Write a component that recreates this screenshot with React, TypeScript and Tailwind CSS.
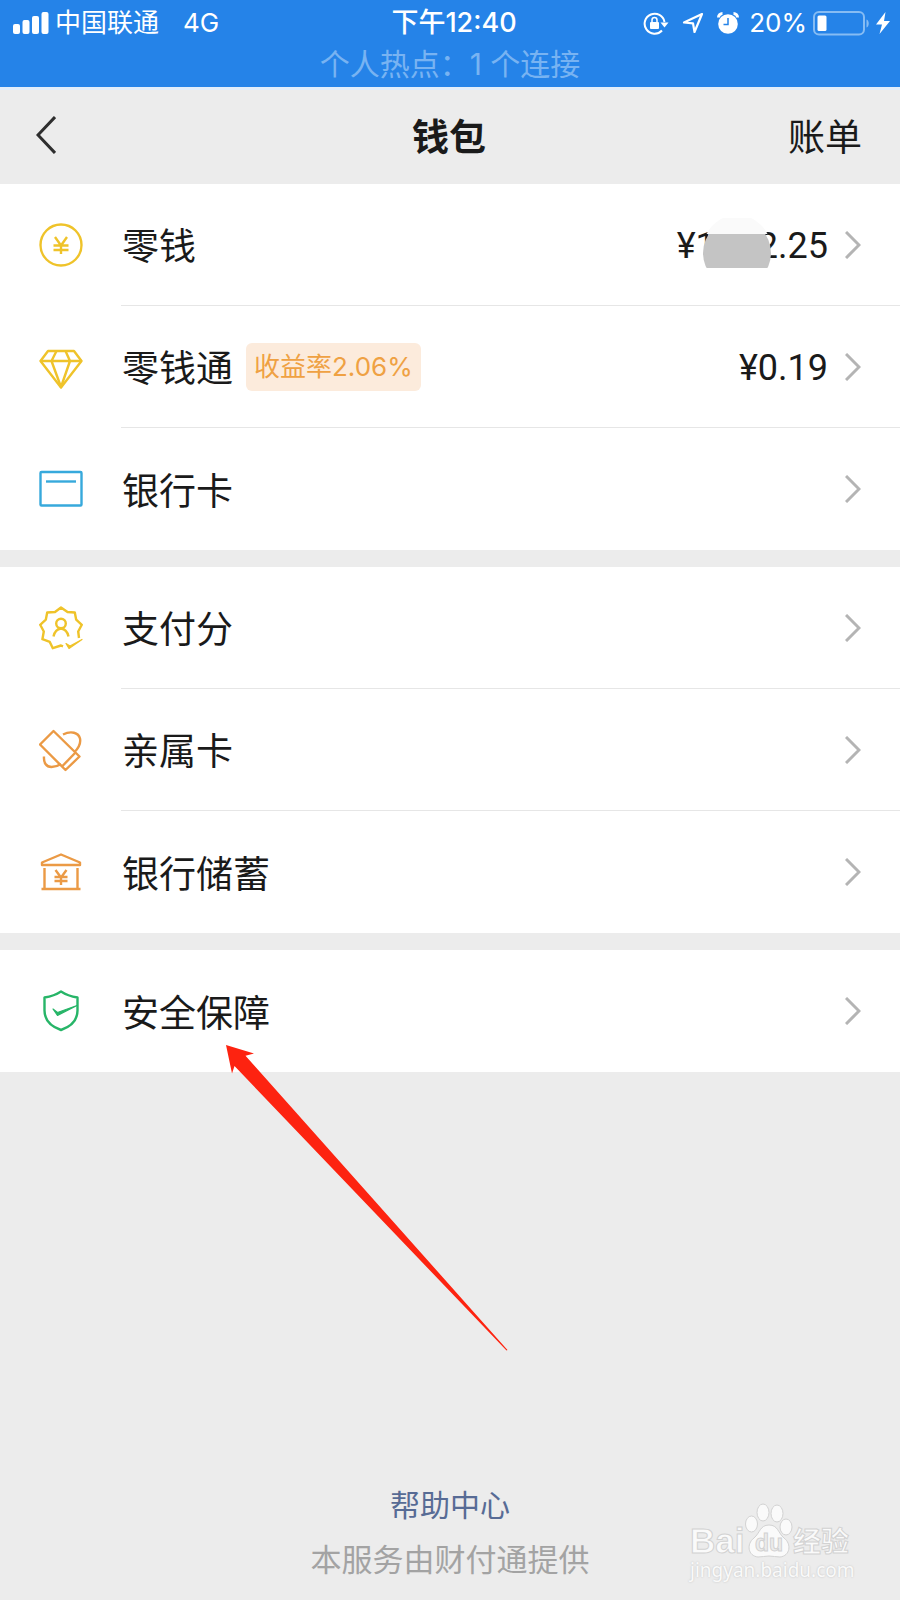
import type { ReactNode } from "react";

type Item = {
  label: string;
  icon: ReactNode;
  rate?: string;
  amount?: ReactNode;
  pointer?: boolean;
};

const iconProps = {
  viewBox: "0 0 44 44",
  fill: "none",
  stroke: "currentColor",
  strokeWidth: 2.4,
  strokeLinejoin: "round" as const,
  "aria-hidden": true,
};

function CoinIcon() {
  return (
    <svg {...iconProps} className="size-11 text-[#efc32a]">
      <circle cx="22" cy="22" r="20.5" />
      <path d="M16 14l6 8.500 6-8.500M22 22.500V31M14.500 22.500h15M14.500 27h15" />
    </svg>
  );
}

function DiamondIcon() {
  return (
    <svg {...iconProps} className="size-11 text-[#efc32a]">
      <path d="M1.500 16L9 6h26l7.500 10L22 42.500z" />
      <path d="M1.500 16h41M17.500 6l-5 10L22 42l9-26-4.500-10" />
    </svg>
  );
}

function CardIcon() {
  return (
    <svg {...iconProps} className="size-11 text-[#37a9dc]">
      <rect x="1.500" y="5" width="41" height="33.500" rx="1" />
      <path d="M7 14.500h30" />
    </svg>
  );
}

function ScoreIcon() {
  return (
    <svg {...iconProps} className="size-11 text-[#efc32a]">
      <path d="M40 32l-.8-6.500 3.600-6.700-5.600-5.100-1.400-7.200-7.300-.5L22 1.500 16 6l-7.800.5-1.400 7.200-5.600 5.100 3.600 6.700-1.400 7.700 7.400 2.700 3 6.300L22 39.500l2 .8" />
      <circle cx="22" cy="17.500" r="4.800" />
      <path d="M14.500 30.500c1-4.500 3.500-7.500 7.500-8 4 .5 6.500 3.500 7.500 8" />
      <path d="M27 37.500l4 2.500 12-6.500L30 42.500z" fill="currentColor" strokeWidth="1.200" />
    </svg>
  );
}

function FamilyCardIcon() {
  return (
    <svg {...iconProps} className="size-11 text-[#eb9a45]">
      <path d="M1 16.500L14.500 3 40.500 28.500 26.500 42z" />
      <path d="M23 38.500L36.500 24.500" />
      <path d="M24 6.500c8-4 15.500-2 17 4 1 5-2 10-5.500 13.500M5 28.500c-.5 6 2 10.500 7.500 10.500 3.500 0 6.500-1 9.500-3" />
    </svg>
  );
}

function SavingsIcon() {
  return (
    <svg {...iconProps} className="size-11 text-[#eb9a45]">
      <path d="M3 15v-2.500l19-8 19 8V15zM5.500 18v21M38.500 18v21M2.500 39h39" />
      <path d="M16.500 20l5.500 7.500 5.500-7.500M22 27.500V35M15.500 27h13M15.500 31h13" />
    </svg>
  );
}

function ShieldIcon() {
  return (
    <svg {...iconProps} className="size-11 text-[#27b568]">
      <path d="M22 2.500c4.500 3 10 5 16.500 6v13c0 9.500-6.500 16-16.500 19.500C12 37.500 5.500 31 5.500 21.500v-13C12 7.500 17.500 5.500 22 2.500z" />
      <path d="M14 20l4.500 3.500L38 16.500 18.500 26.500z" fill="currentColor" strokeWidth="1.200" />
    </svg>
  );
}

function Chevron() {
  return (
    <svg viewBox="0 0 16 28" className="h-7 w-4 shrink-0" fill="none" stroke="#b4b4b4" strokeWidth="3" aria-hidden>
      <path d="M1 1l13 13L1 27" />
    </svg>
  );
}

/** Balance with the middle digits hidden behind a grey smudge. */
function MaskedAmount() {
  return (
    <span className="relative inline-flex">
      <span>¥1</span>
      <span className="w-[42px]" />
      <span>2.25</span>
      <svg viewBox="0 0 70 70" className="absolute top-0 left-[25px] size-[70px]" aria-hidden>
        <clipPath id="smudge">
          <circle cx="35" cy="35" r="34" />
        </clipPath>
        <path d="M4.500 16a34 34 0 0 1 61 0z" fill="#fafafa" />
        <rect x="0" y="16" width="70" height="34" fill="#c4c4c4" clipPath="url(#smudge)" />
      </svg>
    </span>
  );
}

const groups: Item[][] = [
  [
    { label: "零钱", icon: <CoinIcon />, amount: <MaskedAmount /> },
    { label: "零钱通", icon: <DiamondIcon />, rate: "收益率2.06%", amount: "¥0.19" },
    { label: "银行卡", icon: <CardIcon /> },
  ],
  [
    { label: "支付分", icon: <ScoreIcon /> },
    { label: "亲属卡", icon: <FamilyCardIcon /> },
    { label: "银行储蓄", icon: <SavingsIcon /> },
  ],
  [{ label: "安全保障", icon: <ShieldIcon />, pointer: true }],
];

function StatusBar() {
  return (
    <div className="h-[87px] bg-[#2583e8] font-[Inter,'Noto_Sans_CJK_SC',sans-serif] text-white">
      <div className="grid h-[46px] grid-cols-[1fr_auto_1fr] items-center text-[26px] leading-[46px]">
        <div className="flex items-center pl-[13px]">
          <svg viewBox="0 0 36 22" className="h-[22px] w-9" fill="currentColor" aria-hidden>
            <rect x="0" y="12" width="7" height="10" rx="2" />
            <rect x="9.500" y="8" width="7" height="14" rx="2" />
            <rect x="19" y="4" width="7" height="18" rx="2" />
            <rect x="28.500" y="0" width="7" height="22" rx="2" />
          </svg>
          <span className="ml-[6px]">中国联通</span>
          <span className="ml-6">4G</span>
        </div>
        <span className="pl-2 text-[27px] font-medium">下午12:40</span>
        <div className="flex items-center justify-end pr-[10px]">
          <svg viewBox="0 0 26 24" className="h-6 w-[26px]" fill="none" stroke="currentColor" strokeWidth="2" aria-hidden>
            <path d="M19 19.500A10 10 0 1 1 21.500 11" />
            <path d="M17.500 11.500h8l-4 5z" fill="currentColor" stroke="none" />
            <rect x="7" y="11" width="9" height="7" rx="1" fill="currentColor" stroke="none" />
            <path d="M9 11.500V9a2.500 2.500 0 0 1 5 0v2.500" strokeWidth="1.500" />
          </svg>
          <svg viewBox="0 0 22 22" className="ml-[13px] size-[22px]" fill="none" stroke="currentColor" strokeWidth="2.200" strokeLinejoin="round" aria-hidden>
            <path d="M20 2L2 10.500l9 .8L12.500 20z" />
          </svg>
          <svg viewBox="0 0 22 22" className="ml-[13px] size-[22px]" aria-hidden>
            <circle cx="11" cy="12" r="9.800" fill="currentColor" />
            <path d="M1.500 5.500a4 4 0 0 1 4-4M20.500 5.500a4 4 0 0 0-4-4" fill="none" stroke="currentColor" strokeWidth="3" />
            <path d="M11 6v6.500H6.500" fill="none" stroke="#2583e8" strokeWidth="1.500" />
          </svg>
          <span className="ml-[10px]">20%</span>
          <svg viewBox="0 0 58 25" className="ml-[6px] h-[25px] w-[58px]" fill="none" aria-hidden>
            <rect x="1" y="1" width="50" height="22.500" rx="5" stroke="#86bcf3" strokeWidth="2" />
            <rect x="4.500" y="4.500" width="9" height="15.500" rx="1.500" fill="currentColor" />
            <path d="M53.500 8.500c3 1 3 7 0 8z" fill="#86bcf3" />
          </svg>
          <svg viewBox="0 0 14 22" className="ml-[5px] h-[22px] w-[14px]" fill="currentColor" aria-hidden>
            <path d="M9.500 0L0 12.500h6L3.500 22 14 9H8z" />
          </svg>
        </div>
      </div>
      <p className="text-center text-[30px] leading-9 text-[#78b3f2]">个人热点：1 个连接</p>
    </div>
  );
}

function NavBar() {
  return (
    <header className="grid h-[97px] grid-cols-3 items-center border-t-3 border-[#e2eefb] pr-[38px] pb-[5px] pl-9 text-[37px] leading-[48px] text-[#1a1a1a]">
      <button type="button" aria-label="返回" className="justify-self-start">
        <svg viewBox="0 0 20 38" className="h-[38px] w-5" fill="none" stroke="#2e2e2e" strokeWidth="3" aria-hidden>
          <path d="M19 1L2 19l17 18" />
        </svg>
      </button>
      <h1 className="text-center font-bold">钱包</h1>
      <button type="button" className="justify-self-end">
        账单
      </button>
    </header>
  );
}

function Row({ item, last }: { item: Item; last: boolean }) {
  return (
    <li className="relative">
      <a href="#" className="flex h-[122px] items-center pl-[39px]">
        {item.icon}
        <span
          className={`ml-[38px] flex h-full flex-1 items-center pr-[39px] pl-px text-[37px] leading-[56px] text-[#1a1a1a] ${last ? "" : "border-b border-[#e6e6e6]"}`}
        >
          <span className="pb-px">{item.label}</span>
          {item.rate ? (
            <span className="ml-[13px] rounded-md bg-[#fcebdc] px-2 font-[Inter,'Noto_Sans_CJK_SC',sans-serif] text-[26px] leading-[48px] text-[#efa143]">
              {item.rate}
            </span>
          ) : null}
          <span className="mr-[17px] ml-auto pt-[2px] font-[Roboto,sans-serif] text-[36px]">{item.amount}</span>
          <Chevron />
        </span>
      </a>
      {item.pointer ? (
        <svg viewBox="0 0 282 306" className="pointer-events-none absolute top-[95px] left-[226px] z-10 h-[306px] w-[282px]" aria-hidden>
          <path d="M0 0l28 8.500-8.500 2.300L281.500 305l-1 .5L8.500 21 6 28.500z" fill="#fd2310" />
        </svg>
      ) : null}
    </li>
  );
}

function Watermark() {
  return (
    <div className="absolute right-[48px] bottom-[18px] w-[164px] text-[#fafafa]" aria-hidden>
      <svg viewBox="0 0 164 56" className="block h-14 w-[164px] overflow-visible" fill="#fafafa" stroke="#d2d2d2" strokeWidth="1">
        <text x="2" y="51" fontFamily="Liberation Sans" fontWeight="700" fontSize="35">
          Bai
        </text>
        <ellipse cx="63.500" cy="22" rx="6" ry="8" />
        <ellipse cx="75" cy="10.500" rx="6" ry="8.500" />
        <ellipse cx="89" cy="11.500" rx="6" ry="8.500" />
        <ellipse cx="98" cy="25" rx="6" ry="8" />
        <path d="M81 23c-9 0-9 8-15 13-8 6-6 18 4 19 4 0 7-1 11-1s7 1 11 1c10-1 12-13 4-19-6-5-6-13-15-13z" />
        <text x="67" y="49" fontFamily="Liberation Sans" fontWeight="700" fontSize="23" fill="#ececec">
          du
        </text>
        <text x="105" y="50" fontFamily="Noto Sans CJK SC" fontWeight="700" fontSize="28">
          经验
        </text>
      </svg>
      <p className="pl-[2px] font-['Noto_Sans',sans-serif] text-[19px] leading-6 [text-shadow:0_0_2px_#bdbdbd]">jingyan.baidu.com</p>
    </div>
  );
}

export default function App() {
  return (
    <div className="flex min-h-screen flex-col bg-[#ececec] font-['Noto_Sans_CJK_SC',sans-serif]">
      <StatusBar />
      <NavBar />
      <main className="flex flex-col gap-[17px]">
        {groups.map((items) => (
          <ul key={items[0].label} className="bg-white">
            {items.map((item, i) => (
              <Row key={item.label} item={item} last={i === items.length - 1} />
            ))}
          </ul>
        ))}
      </main>
      <footer className="relative mt-auto flex flex-col items-center gap-[15px] pb-[22px] text-[31px] leading-10">
        <a href="#" className="text-[30px] text-[#576b95]">
          帮助中心
        </a>
        <p className="text-[#a3a3a3]">本服务由财付通提供</p>
        <Watermark />
      </footer>
    </div>
  );
}
